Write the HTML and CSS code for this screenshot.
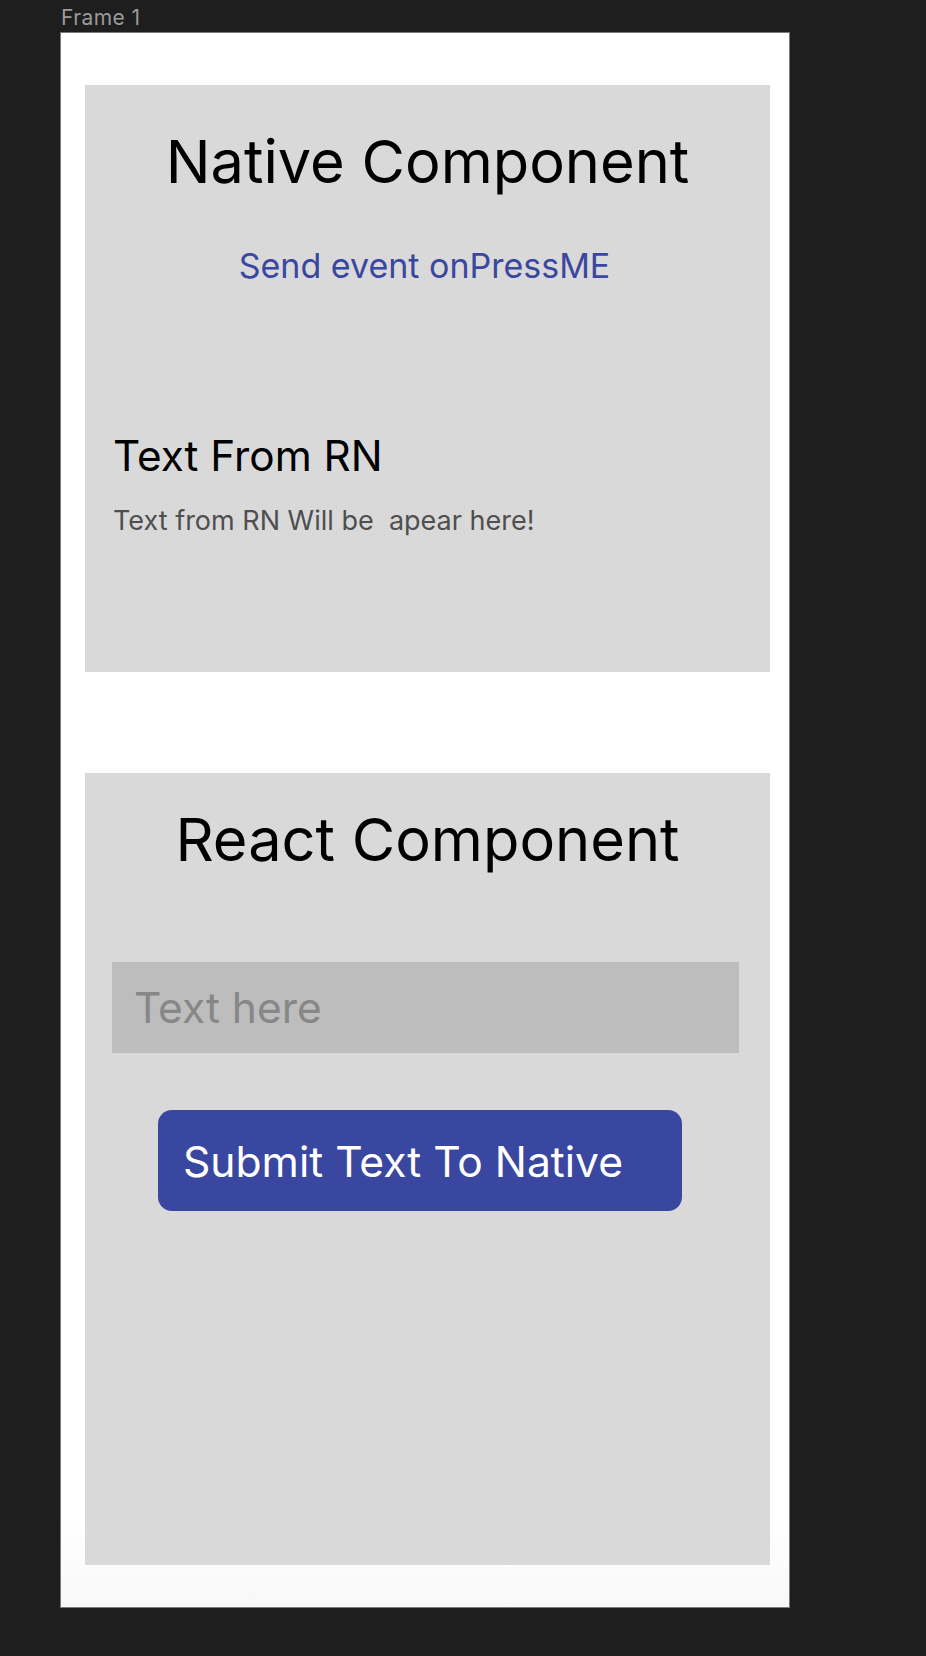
FILE: index.html
```html
<!DOCTYPE html>
<html lang="en">
<head>
<meta charset="utf-8">
<title>Frame 1</title>
<link rel="stylesheet" href="styles.css">
</head>
<body>
<div class="canvas">
  <div class="frame-label">Frame 1</div>
  <div class="frame">
    <section class="panel panel-native">
      <h1 class="panel-title">Native Component</h1>
      <div class="link">Send event onPressME</div>
      <h2 class="sub-title">Text From RN</h2>
      <p class="sub-text">Text from RN Will be&nbsp; apear here!</p>
    </section>
    <section class="panel panel-react">
      <h1 class="panel-title react-title">React Component</h1>
      <div class="input"><span class="placeholder">Text here</span></div>
      <div class="button">Submit Text To Native</div>
    </section>
  </div>
</div>
</body>
</html>
```
FILE: styles.css
```css
* { box-sizing: border-box; }
html, body { margin: 0; padding: 0; }
body {
  background: #1e1e1e;
  font-family: Inter, "Noto Sans", sans-serif;
  width: 926px;
  height: 1656px;
  overflow: hidden;
}
.canvas {
  padding-left: 61px;
}
.frame-label {
  height: 33px;
  font-size: 21px;
  letter-spacing: 0.4px;
  line-height: 32px;
  color: #9b9b9b;
  padding-top: 2px;
}
.frame {
  width: 728px;
  height: 1574px;
  background: linear-gradient(to bottom, #ffffff 0, #ffffff calc(100% - 90px), #f8f8f8 100%);
  box-shadow: 0 0 0 1px #7a7a7a;
  padding: 52px 0 0 24px;
  display: flex;
  flex-direction: column;
  gap: 101px;
}
.panel {
  width: 685px;
  background: #d9d9d9;
  display: flex;
  flex-direction: column;
}
.panel-native {
  height: 587px;
  padding: 40px 0 0 28px;
}
.panel-react {
  height: 792px;
  padding: 30px 0 0 27px;
}
.panel-title {
  margin: 0 0 0 -28px;
  font-size: 59.5px;
  font-weight: 400;
  line-height: 72px;
  color: #000;
  text-align: center;
}
.react-title {
  margin-left: -27px;
}
.link {
  margin: 49px 0 0 -28px;
  font-size: 34px;
  line-height: 40px;
  color: #3a47a0;
  text-align: center;
  padding-right: 6px;
}
.sub-title {
  margin: 144px 0 0 0;
  font-size: 42.3px;
  font-weight: 400;
  line-height: 52px;
  color: #000;
}
.sub-text {
  margin: 22px 0 0 0;
  font-size: 27px;
  line-height: 34px;
  color: #4f4f4f;
}
.input {
  margin-top: 87px;
  width: 627px;
  height: 91px;
  background: #bdbdbd;
  padding-left: 22px;
  font-size: 42.5px;
  line-height: 91px;
}
.placeholder {
  color: #878787;
}
.button {
  margin: 57px 0 0 46px;
  width: 524px;
  height: 101px;
  border-radius: 14px;
  background: #3a47a0;
  color: #ffffff;
  font-size: 42.6px;
  line-height: 99px;
  padding: 2px 0 0 25px;
}
```
